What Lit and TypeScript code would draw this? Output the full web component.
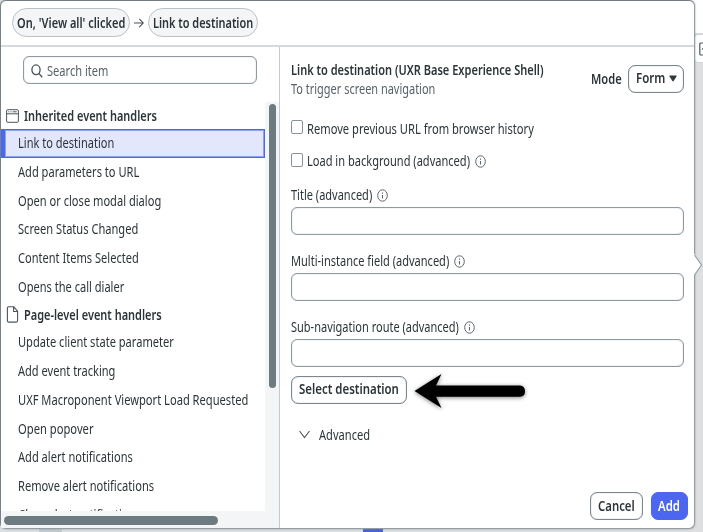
import { LitElement, html, css } from "lit";
import { customElement, property, query } from "lit/decorators.js";

/** A line of text condensed horizontally to a given width. */
@customElement("fit-text")
class FitText extends LitElement {
  @property({ type: Number }) w = 0;
  @property() text = "";
  @query("span") label!: HTMLSpanElement;

  static styles = css`
    :host { display: block; flex: none; white-space: nowrap; line-height: 20px; height: 20px; }
    span { display: inline-block; transform-origin: 0 50%; }
  `;

  render() {
    return html`<span>${this.text}</span>`;
  }

  updated() {
    this.style.width = `${this.w}px`;
    this.label.style.transform = `scaleX(${this.w / this.label.offsetWidth})`;
  }
}

const t = (text: string, w: number) => html`<fit-text .text=${text} .w=${w}></fit-text>`;

const inherited: [string, number][] = [
  ["Link to destination", 96.5],
  ["Add parameters to URL", 121.5],
  ["Open or close modal dialog", 143],
  ["Screen Status Changed", 120],
  ["Content Items Selected", 120.5],
  ["Opens the call dialer", 106.5],
];

const pageLevel: [string, number][] = [
  ["Update client state parameter", 156],
  ["Add event tracking", 97.5],
  ["UXF Macroponent Viewport Load Requested", 230],
  ["Open popover", 75.5],
  ["Add alert notifications", 115],
  ["Remove alert notifications", 136.5],
  ["Clear alert notifications", 123],
];

const fields: [string, number][] = [
  ["Title (advanced)", 81.5],
  ["Multi-instance field (advanced)", 158.5],
  ["Sub-navigation route (advanced)", 168],
];

const info = html`<svg class="info" viewBox="0 0 11 13">
  <ellipse cx="5.5" cy="6.5" rx="4.8" ry="5.7" fill="none" stroke="#5b666d" stroke-width="1" />
  <path d="M5.5 5.9v3.5M5.5 3.5v1.2" stroke="#5b666d" stroke-width="1.1" />
</svg>`;

@customElement("app-root")
class AppRoot extends LitElement {
  static styles = css`
    :host {
      display: block; position: relative; width: 703px; height: 532px; overflow: hidden;
      background: #dddfe1; color: #2b3539;
      font: 13.5px/20px "Noto Sans", "Open Sans", sans-serif;
    }
    * { box-sizing: border-box; }
    svg { display: block; flex: none; }
    .corner { position: absolute; right: 0; top: 0; width: 20px; height: 35px; background: #fff; border-bottom: 2px solid #d3d9dc; }
    .tab { position: absolute; left: 694px; top: 34px; width: 20px; height: 29px; background: #fff; border: 1px solid #d0d5d8; border-radius: 4px; }
    .tab svg { position: absolute; left: 4px; top: 7px; }
    .stub { position: absolute; left: 39px; top: 528px; width: 23px; height: 4px; background: #c3c9cc; }
    .stub.blue { left: 363px; width: 20px; background: #4961cf; }
    .panel {
      position: relative; width: 695px; height: 529px; background: #fff; display: flex; flex-direction: column;
      border: 1px solid #939da3; border-top-color: #737c86; border-left-color: #76828a; border-radius: 6px;
      box-shadow: 0 0 2px #8b959a;
    }
    .pointer { position: absolute; left: 692px; top: 254px; }
    header { height: 46px; flex: none; display: flex; align-items: center; padding: 0 0 1px 11px; border-bottom: 2px solid #d3d9dc; }
    .pill { height: 29px; border: 1px solid #b9c0c6; border-radius: 14.5px; background: #f4f5f7; display: flex; align-items: center; padding: 0 3.5px 0 4px; font-weight: 600; }
    .pill + svg + .pill { padding: 0 3.5px; }
    .arrow { margin: 0 4px; }
    .body { flex: 1; min-height: 0; display: flex; }
    aside { width: 279px; border-right: 1px solid #c3cbd0; display: flex; flex-direction: column; flex: none; }
    .search { flex: none; width: 233.5px; height: 28px; margin: 9px 0 18px 22px; border: 1px solid #8e99a1; box-shadow: inset 0 0 1px #8e99a1; border-radius: 6px; display: flex; align-items: center; padding: 1px 0 0 7px; gap: 4px; color: #566168; }
    .scroll { flex: 1; min-height: 0; display: grid; grid-template: 408.5px 1fr / 264px 1fr; background: #f4f5f7; }
    .list { overflow: hidden; background: #fff; }
    .group { height: 27px; display: flex; align-items: center; font-weight: 600; padding-left: 5px; gap: 5px; }
    .row { height: 28.7px; display: flex; align-items: center; padding-left: 17px; }
    .row.on { background: #e3e7fb; border: 1px solid #4a67ee; border-left-width: 4px; padding-left: 13px; box-shadow: inset 0 0 0 1px rgba(74, 103, 238, .55); }
    .vbar { width: 7.5px; height: 284px; margin: 2px 0 0 3.5px; border-radius: 4px; background: #6c7b80; }
    .hbar { width: 214px; height: 9.5px; margin: 5px 0 0 3px; border-radius: 5px; background: #6c7b80; }
    main { flex: 1; display: flex; flex-direction: column; padding: 12.5px 10.5px 8px 11px; }
    .top { display: flex; height: 42px; }
    .titles { flex: 1; }
    b { font-weight: 600; display: block; }
    .sub { color: #566168; margin-top: -1px; }
    .mode { display: flex; align-items: center; gap: 7px; height: 38px; font-weight: 600; }
    .btn { height: 28px; border: 1px solid #7c888f; box-shadow: inset 0 0 1px #7c888f; border-radius: 7px; display: flex; align-items: center; padding: 0 7px 1px; font-weight: 600; gap: 3.5px; }
    .mode .btn { padding: 0 6px 1px 7px; }
    .btn.primary { background: #4c66f0; border-color: #4c66f0; color: #fff; padding: 0 6.5px 1px; box-shadow: none; }
    .check { height: 20px; display: flex; align-items: center; gap: 4px; margin: 12.5px 0 0; }
    .check.first { margin-top: 17px; }
    .box { width: 11.5px; height: 14px; border: 1px solid #87939a; border-radius: 2px; margin-bottom: 3px; }
    .info { width: 11px; height: 13px; margin-left: 1px; }
    .label { display: flex; align-items: center; gap: 3.5px; height: 20px; margin-bottom: 2px; }
    .fields { display: grid; gap: 16.7px; margin-top: 14px; }
    .input { height: 27.5px; border: 1px solid #8e99a1; box-shadow: inset 0 0 1px #8e99a1; border-radius: 6px; }
    .select { display: flex; margin-top: 8px; align-items: center; }
    .point { margin: -6px 0 -6px 4.5px; }
    .adv { display: flex; align-items: center; gap: 9px; margin: 20px 0 0 7.5px; }
    footer { display: flex; justify-content: flex-end; gap: 8px; margin: auto -4px 0 0; }
  `;

  render() {
    return html`
      <div class="corner"></div>
      <div class="tab">
        <svg width="12" height="14" viewBox="0 0 12 14" fill="none" stroke="#4d595f" stroke-width="1.2"><rect x=".8" y="1" width="10" height="12" rx="1" /><path d="M7 4.5 3.5 7 7 9.5" /></svg>
      </div>
      <div class="stub"></div>
      <div class="stub blue"></div>
      <div class="panel">
        <header>
          <div class="pill">${t("On, 'View all' clicked", 108.5)}</div>
          <svg class="arrow" width="10" height="12" viewBox="0 0 10 12" fill="none" stroke="#465158" stroke-width="1.1"><path d="M0 6h9M5.3 1.8 9.2 6 5.3 10.2" /></svg>
          <div class="pill">${t("Link to destination", 100.5)}</div>
        </header>
        <div class="body">
          <aside>
            <div class="search">
              <svg width="12" height="14" viewBox="0 0 12 14" fill="none" stroke="#465158" stroke-width="1.3"><ellipse cx="5" cy="5.8" rx="4.1" ry="4.9" /><path d="m7.9 9.4 3.3 3.8" /></svg>
              ${t("Search item", 61.5)}
            </div>
            <div class="scroll">
              <div class="list">
                <div class="group">
                  <svg width="13" height="14" viewBox="0 0 13 14" fill="none" stroke="#4b565c"><rect x=".6" y=".7" width="11.8" height="12.6" rx="1.2" /><path d="M.6 4.8h11.8M2.3 2.8h1M4.5 2.8h1M6.7 2.8h4" /></svg>
                  ${t("Inherited event handlers", 132.5)}
                </div>
                ${inherited.map(([s, w], i) => html`<div class="row ${i === 0 ? "on" : ""}">${t(s, w)}</div>`)}
                <div class="group">
                  <svg width="13" height="17" viewBox="0 0 13 17" fill="none" stroke="#4b565c" stroke-width="1.1"><path d="M2.8.8h5l3.8 4.4v9.3q0 1.6-1.4 1.6H2.8q-1.4 0-1.4-1.6V2.4Q1.4.8 2.8.8ZM7.6.8v4.7h4" /></svg>
                  ${t("Page-level event handlers", 137.5)}
                </div>
                ${pageLevel.map(([s, w]) => html`<div class="row">${t(s, w)}</div>`)}
              </div>
              <div class="vbar"></div>
              <div class="hbar"></div>
            </div>
          </aside>
          <main>
            <div class="top">
              <div class="titles">
                <b>${t("Link to destination (UXR Base Experience Shell)", 252.5)}</b>
                <div class="sub">${t("To trigger screen navigation", 144.5)}</div>
              </div>
              <div class="mode">
                ${t("Mode", 30.5)}
                <div class="btn">
                  ${t("Form", 29)}
                  <svg width="8" height="7" viewBox="0 0 8 7"><path d="M.8.5h6.4q.8.2.3.9L4.6 6q-.6.8-1.2 0L.5 1.4Q0 .7.8.5Z" fill="#2f3a40" /></svg>
                </div>
              </div>
            </div>
            <div class="check first"><div class="box"></div>${t("Remove previous URL from browser history", 226.5)}</div>
            <div class="check"><div class="box"></div>${t("Load in background (advanced)", 163)}${info}</div>
            <div class="fields">
              ${fields.map(([s, w]) => html`<div><div class="label">${t(s, w)}${info}</div><div class="input"></div></div>`)}
            </div>
            <div class="select">
              <div class="btn">${t("Select destination", 100)}</div>
              <svg class="point" width="120" height="42" viewBox="0 0 120 42">
                <defs><filter id="s" x="-10%" y="-30%" width="120%" height="160%"><feDropShadow dx="0" dy="1" stdDeviation="2" flood-opacity=".5" /></filter></defs>
                <path filter="url(#s)" d="M2.5 22 29.5 5 24 16.5h84q5 .5 5 5.7t-5 5.6H24l5.5 11.2Z" fill="#000" />
              </svg>
            </div>
            <div class="adv">
              <svg width="11" height="9" viewBox="0 0 11 9" fill="none" stroke="#4b565c" stroke-width="1.1"><path d="m.5 1 5 6.5 5-6.5" /></svg>
              ${t("Advanced", 51)}
            </div>
            <footer>
              <div class="btn">${t("Cancel", 37)}</div>
              <div class="btn primary">${t("Add", 22)}</div>
            </footer>
          </main>
        </div>
      </div>
      <svg class="pointer" width="11" height="22" viewBox="0 0 11 22"><path d="M0 0h2.5L9.5 11 2.5 21H0Z" fill="#fff" /><path d="M2.5 1 9.5 11 2.5 21" fill="none" stroke="#939da3" stroke-width="1.2" /></svg>
    `;
  }
}
